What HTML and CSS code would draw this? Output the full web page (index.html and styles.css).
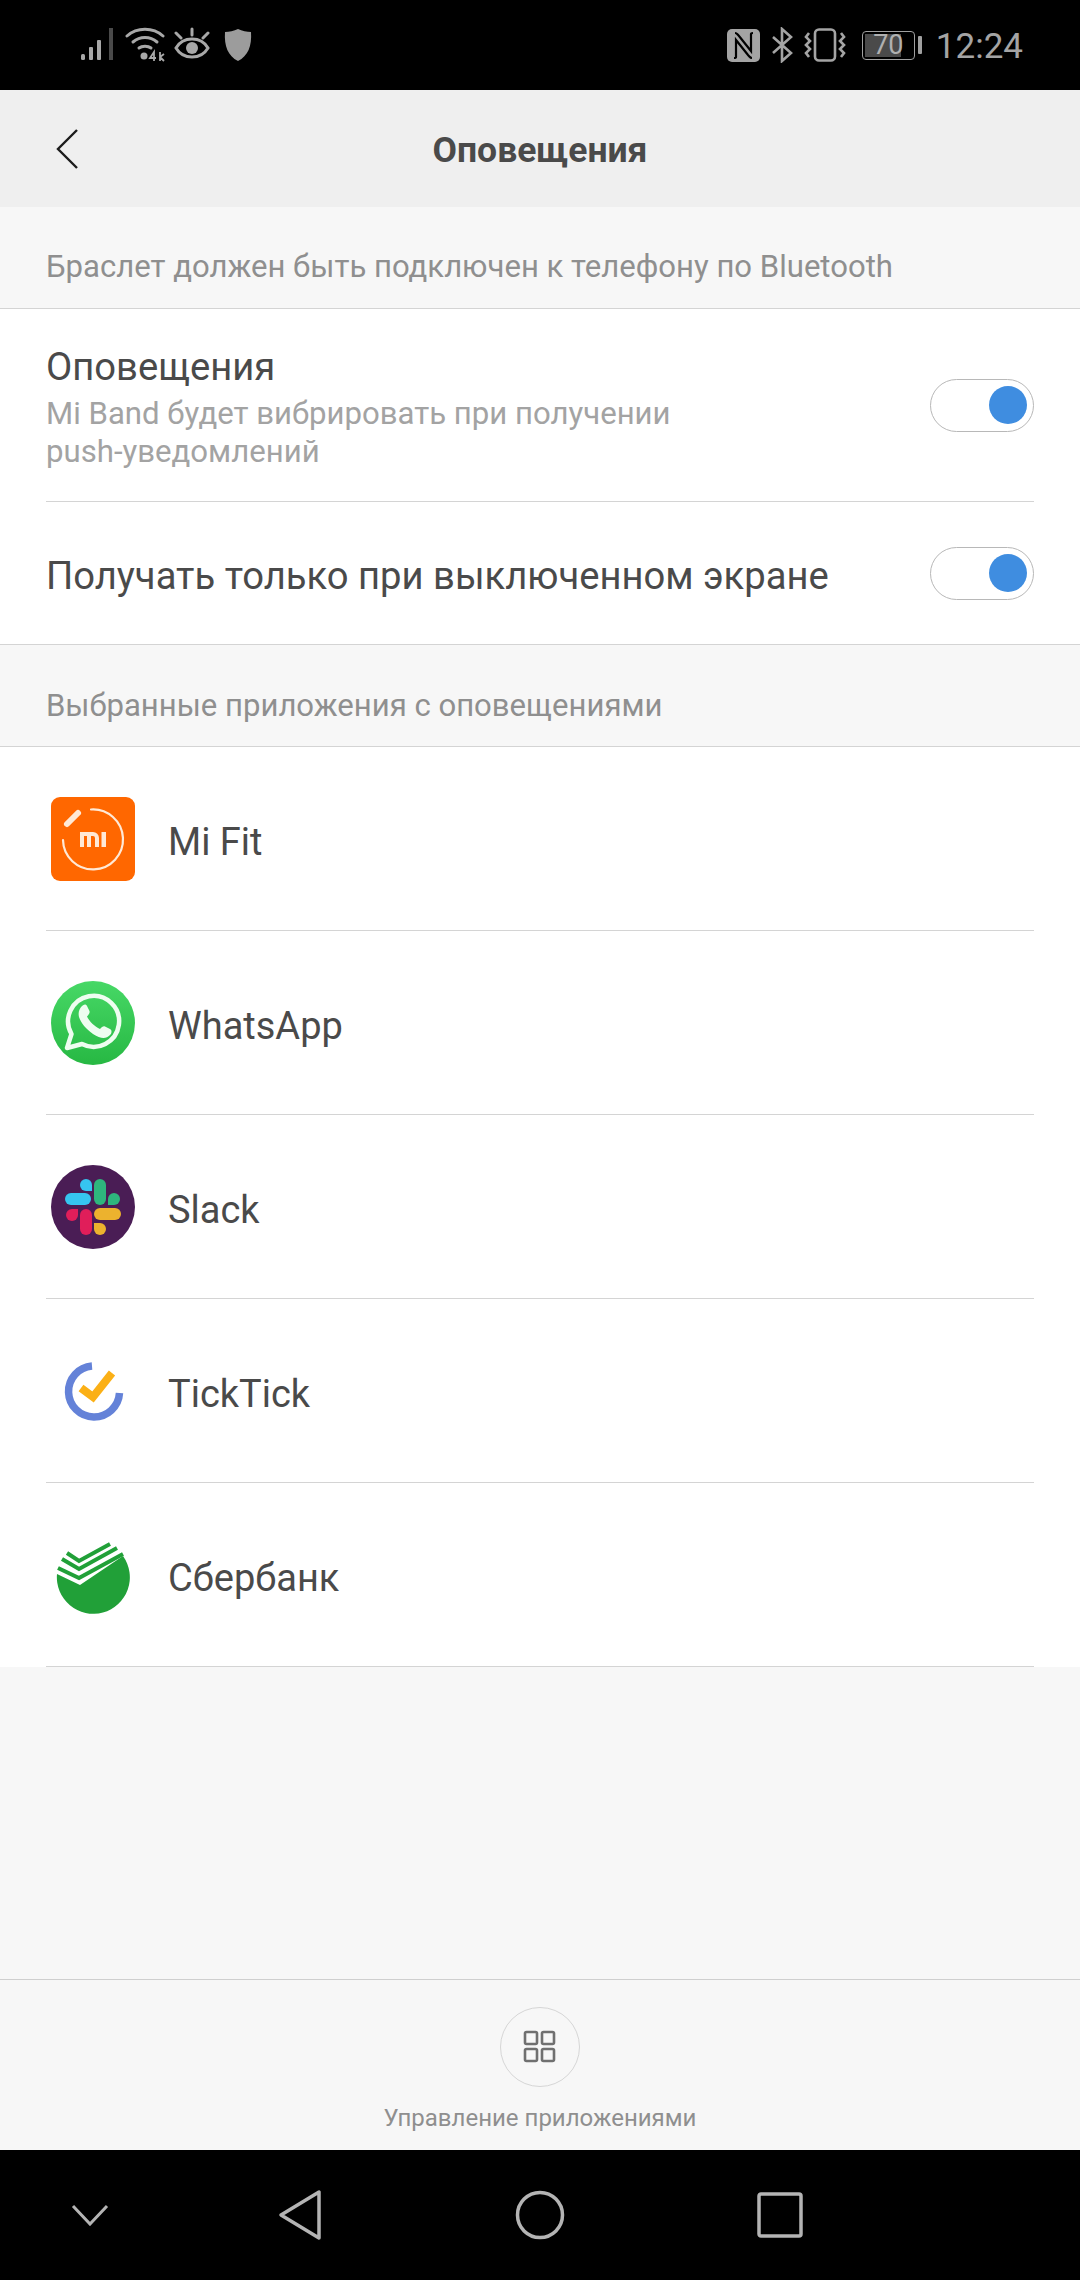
FILE: index.html
```html
<!DOCTYPE html>
<html lang="ru">
<head>
<meta charset="utf-8">
<title>Оповещения</title>
<link rel="stylesheet" href="styles.css">
</head>
<body>
<div class="screen">
  <div class="status">
    <div class="status-left">
      <svg class="ic" width="36" height="36" viewBox="0 0 36 36"><g fill="#a8a8a8"><rect x="1" y="27" width="4" height="6" rx="1.5"/><rect x="9" y="20" width="4" height="13" rx="1"/><rect x="17" y="13" width="4" height="20" rx="1"/></g><rect x="29" y="1" width="4" height="32" fill="#4a4a4a"/></svg>
      <svg class="ic" width="40" height="36" viewBox="0 0 40 36"><g fill="none" stroke="#a8a8a8" stroke-width="3" stroke-linecap="round"><path d="M2 9C12 0 28 0 38 9"/><path d="M8 15C15 9 25 9 32 15"/><path d="M14 21C17 18.500 23 18.500 26 21"/></g><circle cx="19" cy="29" r="3.500" fill="#a8a8a8"/><path d="M29 34V25L25 31H31M35 34V25M35 30L39 27M35 30L39 34" fill="none" stroke="#a8a8a8" stroke-width="1.800"/></svg>
      <svg class="ic" width="36" height="36" viewBox="0 0 36 36"><g fill="none" stroke="#a8a8a8" stroke-width="3" stroke-linecap="round"><path d="M2 21C9 9 27 9 34 21C27 33 9 33 2 21Z"/><path d="M18 2V8M2 6L7 11M34 6L29 11"/></g><circle cx="18" cy="21" r="6" fill="#a8a8a8"/></svg>
      <svg class="ic ic-shield" width="28" height="34" viewBox="0 0 28 34"><path d="M14 1C18 3 23 4 27 4C28 18 24 28 14 33C4 28 0 18 1 4C5 4 10 3 14 1Z" fill="#9c9c9c"/></svg>
    </div>
    <div class="status-right">
      <svg class="ic" width="33" height="33" viewBox="0 0 33 33"><rect width="33" height="33" rx="5" fill="#a4a4a4"/><path d="M8 4C10 4 10 5 12 7L24 22V5C24 4 25 4 26 4M25 29C23 29 23 28 21 26L9 11V28C9 29 8 29 7 29" fill="none" stroke="#000" stroke-width="2.200"/></svg>
      <svg class="ic" width="22" height="36" viewBox="0 0 22 36"><path d="M2 10L20 26L11 34V2L20 10L2 26" fill="none" stroke="#a4a4a4" stroke-width="2.600"/></svg>
      <svg class="ic" width="42" height="34" viewBox="0 0 42 34"><rect x="11" y="1.500" width="20" height="31" rx="4" fill="none" stroke="#a4a4a4" stroke-width="2.600"/><path d="M5 5L2 9L6 13L2 17L6 21L2 25L5 29M37 5L40 9L36 13L40 17L36 21L40 25L37 29" fill="none" stroke="#a4a4a4" stroke-width="2.600"/></svg>
      <div class="battery"><div class="battery-body"><div class="battery-fill"></div><span class="battery-num">70</span></div><div class="battery-cap"></div></div>
      <span class="clock">12:24</span>
    </div>
  </div>

  <header class="header">
    <svg class="back" width="24" height="42" viewBox="0 0 24 42"><path d="M21 2L2 21L21 40" fill="none" stroke="#1c1c1c" stroke-width="2.400"/></svg>
    <h1 class="title">Оповещения</h1>
  </header>

  <main class="content">
    <div class="section-label first">Браслет должен быть подключен к телефону по Bluetooth</div>
    <section class="group">
      <div class="setting setting-tall">
        <div class="setting-text">
          <div class="setting-title">Оповещения</div>
          <div class="setting-desc">Mi Band будет вибрировать при получении<br>push-уведомлений</div>
        </div>
        <div class="switch"><div class="knob"></div></div>
      </div>
      <div class="setting setting-short">
        <div class="setting-title single">Получать только при выключенном экране</div>
        <div class="switch"><div class="knob"></div></div>
      </div>
    </section>
    <div class="section-label">Выбранные приложения с оповещениями</div>
    <section class="apps">
      <div class="app">
        <svg class="app-icon" width="84" height="84" viewBox="0 0 84 84"><rect width="84" height="84" rx="9" fill="#ff6700"/><g fill="none" stroke="#ffe9d6" stroke-linecap="round"><path d="M40 12.500A30 30 0 1 1 12 43" stroke-width="2.200"/><path d="M16 27L27 16" stroke-width="6"/></g><path fill-rule="evenodd" d="M29 35H42A6 6 0 0 1 48 41V50H44V41A2 2 0 0 0 42 39H40V50H36V39H33V50H29ZM50.500 35H55V50H50.500Z" fill="#ffe9d6"/></svg>
        <span class="app-name">Mi Fit</span>
      </div>
      <div class="app">
        <svg class="app-icon" width="84" height="84" viewBox="0 0 84 84"><defs><linearGradient id="wa" x1="0" y1="0" x2="0" y2="1"><stop offset="0" stop-color="#47d866"/><stop offset="1" stop-color="#27b843"/></linearGradient></defs><circle cx="42" cy="42" r="42" fill="url(#wa)"/><path d="M16 67L20.500 53A25.500 25.500 0 1 1 31 63Z" fill="none" stroke="#eefdf0" stroke-width="4.500" stroke-linejoin="round"/><path d="M31 25C33 23 35 23 36 25L38.500 30C39 32 38 33 36 35.500C38 40 44 46 49 48C51 46 52 45 54 45.500L59 48C61 49 61 52 59 54C55 58 50 58 42 53C35 48 30 42 28 36C27 32 28 28 31 25Z" fill="#eefdf0"/></svg>
        <span class="app-name">WhatsApp</span>
      </div>
      <div class="app">
        <svg class="app-icon" width="84" height="84" viewBox="0 0 84 84"><circle cx="42" cy="42" r="42" fill="#4a1d55"/><g stroke-linecap="round" fill="none" stroke-width="12"><path d="M20 34H34" stroke="#36c5f0"/><path d="M49 20V34" stroke="#2eb67d"/><path d="M35 50V64" stroke="#e01e5a"/><path d="M49 49H64" stroke="#ecb22e"/></g><g fill="#36c5f0"><circle cx="35" cy="20" r="6"/><rect x="35" y="20" width="6" height="6"/></g><g fill="#2eb67d"><circle cx="63" cy="34" r="6"/><rect x="57" y="34" width="6" height="6"/></g><g fill="#e01e5a"><circle cx="21" cy="50" r="6"/><rect x="21" y="44" width="6" height="6"/></g><g fill="#ecb22e"><circle cx="49" cy="64" r="6"/><rect x="43" y="58" width="6" height="6"/></g></svg>
        <span class="app-name">Slack</span>
      </div>
      <div class="app">
        <svg class="app-icon" width="84" height="84" viewBox="0 0 84 84"><path d="M41 17A25.500 25.500 0 1 0 68.500 44" fill="none" stroke="#6482d8" stroke-width="7.500" stroke-linecap="butt"/><path d="M30 39L42 48L61 24" fill="none" stroke="#fbb016" stroke-width="8"/></svg>
        <span class="app-name">TickTick</span>
      </div>
      <div class="app">
        <svg class="app-icon" width="84" height="84" viewBox="0 0 84 84"><path d="M6 41L29 52L72 23A36.500 36.500 0 1 1 6 41Z" fill="#21a038"/><g fill="none" stroke="#21a038" stroke-width="4"><path d="M16 20L28 28L59 11"/><path d="M11 26L28 36L66 15"/><path d="M7 35L28 45L72 21"/></g></svg>
        <span class="app-name">Сбербанк</span>
      </div>
    </section>
  </main>

  <footer class="manage">
    <div class="manage-circle">
      <svg width="34" height="34" viewBox="0 0 34 34"><g fill="none" stroke="#707070" stroke-width="2.600"><rect x="2" y="2" width="12" height="12" rx="1.500"/><rect x="19" y="2" width="12" height="12" rx="1.500"/><rect x="2" y="19" width="12" height="12" rx="1.500"/><rect x="19" y="19" width="12" height="12" rx="1.500"/></g></svg>
    </div>
    <div class="manage-label">Управление приложениями</div>
  </footer>

  <nav class="navbar">
    <svg width="38" height="22" viewBox="0 0 38 22"><path d="M2 2L19 20L36 2" fill="none" stroke="#b4b4b4" stroke-width="3"/></svg>
    <svg width="44" height="52" viewBox="0 0 44 52"><path d="M41 3V49L3 26Z" fill="none" stroke="#b4b4b4" stroke-width="3.500" stroke-linejoin="round"/></svg>
    <svg width="50" height="50" viewBox="0 0 50 50"><circle cx="25" cy="25" r="22.500" fill="none" stroke="#b4b4b4" stroke-width="3.500"/></svg>
    <svg width="46" height="46" viewBox="0 0 46 46"><rect x="2" y="2" width="42" height="42" rx="2" fill="none" stroke="#b4b4b4" stroke-width="3.500"/></svg>
  </nav>
</div>
</body>
</html>
```

FILE: styles.css
```css
* { box-sizing: border-box; }
html, body { margin: 0; padding: 0; }
body { width: 1080px; height: 2280px; overflow: hidden; font-family: Roboto, "Noto Sans", sans-serif; }
.screen { width: 1080px; height: 2280px; display: flex; flex-direction: column; background: #f7f7f7; }

.status { height: 90px; flex: none; background: #000; display: flex; justify-content: space-between; align-items: center; padding: 0 57px 0 80px; }
.status-left, .status-right { display: flex; align-items: center; }
.status-left { gap: 9px; }
.status-right { gap: 11px; }
.ic { display: block; flex: none; }
.ic-shield { margin-left: 5px; }
.battery { display: flex; align-items: center; gap: 3px; margin-left: 5px; }
.battery-body { position: relative; width: 53px; height: 29px; border: 1.500px solid #a0a0a0; border-radius: 4px; display: flex; align-items: center; justify-content: center; overflow: hidden; }
.battery-fill { position: absolute; left: 2px; top: 2px; bottom: 2px; width: 70%; background: #4a4a4a; }
.battery-num { position: relative; color: #b0b0b0; font-size: 27px; }
.battery-cap { width: 4px; height: 18px; background: #a0a0a0; border-radius: 1px; }
.clock { color: #a4a4a4; font-size: 35px; padding-top: 3px; margin-left: 3px; }

.header { height: 117px; flex: none; background: #efefef; display: flex; align-items: center; justify-content: center; position: relative; padding-top: 3px; }
.back { position: absolute; left: 56px; top: 38px; }
.title { margin: 0; font-size: 35.500px; font-weight: 700; color: #4a4a4a; }

.content { flex: 1; display: flex; flex-direction: column; }
.section-label { height: 102px; display: flex; align-items: center; padding: 20px 46px 0; font-size: 31.100px; color: #8f8f8f; border-bottom: 1px solid #d4d4d4; }
.section-label.first { padding: 18px 46px 0; }
.group { background: #fff; border-bottom: 1px solid #d4d4d4; }
.setting { margin: 0 46px; display: flex; align-items: center; justify-content: space-between; }
.setting-tall { height: 193px; border-bottom: 1px solid #d4d4d4; }
.setting-short { height: 142px; }
.setting-text { padding-top: 6px; }
.setting-title { font-size: 38.200px; color: #4a4a4a; }
.setting-title.single { padding-top: 6px; }
.setting-desc { font-size: 31.150px; line-height: 38px; color: #a3a3a3; margin-top: 6px; }
.switch { width: 104px; height: 53px; flex: none; border: 1.500px solid #b8b8b8; border-radius: 27px; background: #fff; display: flex; align-items: center; justify-content: flex-end; padding-right: 6px; }
.knob { width: 38px; height: 38px; border-radius: 50%; background: #3f8de0; }

.apps { background: #fff; }
.app { height: 184px; margin: 0 0 0 46px; width: 988px; display: flex; align-items: center; gap: 33px; border-bottom: 1px solid #d4d4d4; padding-left: 5px; }
.app-icon { display: block; flex: none; }
.app-name { font-size: 38px; color: #4a4a4a; padding-top: 6px; }

.manage { margin-top: auto; height: 171px; flex: none; border-top: 1px solid #cfcfcf; display: flex; flex-direction: column; align-items: center; padding-top: 27px; }
.manage-circle { width: 80px; height: 80px; border-radius: 50%; border: 1.500px solid #d6d6d6; display: flex; align-items: center; justify-content: center; }
.manage-label { margin-top: 17px; font-size: 24px; color: #8f8f8f; }

.navbar { height: 130px; flex: none; background: #000; display: grid; grid-template-columns: 180px 240px 240px 240px; align-items: center; justify-items: center; }
```
